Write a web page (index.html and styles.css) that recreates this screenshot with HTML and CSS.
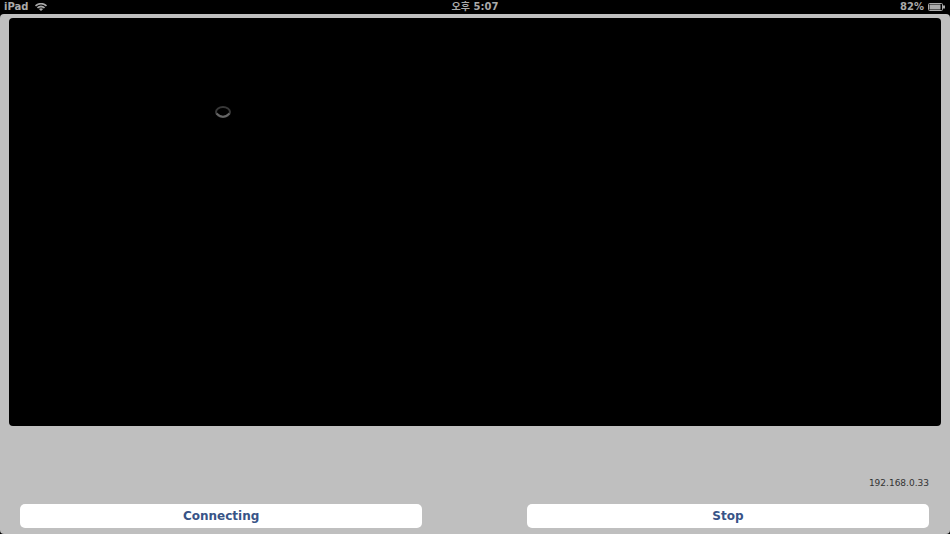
FILE: index.html
```
<!DOCTYPE html>
<html lang="ko">
<head>
    <meta charset="UTF-8">
    <title>Video client</title>
    <link rel="stylesheet" href="styles.css">
</head>
<body class="page">
<header class="status-bar">
    <div class="status-left">
        <span>iPad</span>
        <svg class="wifi" viewBox="0 0 14 9" aria-hidden="true">
            <path d="M.8 3.2Q7-1.6 13.2 3.2M3 5.5Q7 2.3 11 5.5" fill="none" stroke="currentColor" stroke-width="2"/>
            <path d="M4.6 6.7Q7 5 9.4 6.7L7 9z" fill="currentColor"/>
        </svg>
    </div>
    <div class="status-time">오후 5:07</div>
    <div class="status-right">
        <span>82%</span>
        <svg class="battery" viewBox="0 0 18 8" aria-hidden="true">
            <rect x=".5" y=".5" width="14" height="7" rx="1" fill="none" stroke="currentColor"/>
            <rect x="1.5" y="1.5" width="11" height="5" fill="currentColor"/>
            <path d="M15 2.5h2v3h-2z" fill="currentColor"/>
        </svg>
    </div>
</header>
<main class="root">
    <div class="video">
        <svg class="spinner" viewBox="0 0 18 14" aria-hidden="true">
            <ellipse cx="9" cy="7" rx="7" ry="5" fill="none" stroke="#383838" stroke-width="2"/>
            <path d="M2.5 8.5Q9 15 15.5 8.5" fill="none" stroke="#666" stroke-width="2"/>
        </svg>
    </div>
    <div class="address">192.168.0.33</div>
    <div class="controls">
        <button type="button">Connecting</button>
        <button type="button">Stop</button>
    </div>
</main>
</body>
</html>
```
FILE: styles.css
```
* {
    box-sizing: border-box;
}

.page {
    display: flex;
    flex-direction: column;
    min-height: 100vh;
    margin: 0;
    background: black;
    font-family: "DejaVu Sans", "Noto Sans CJK KR", sans-serif;
}

.status-bar {
    display: grid;
    grid-template-columns: 1fr auto 1fr;
    align-items: center;
    height: 14px;
    padding: 0 4px;
    color: #aaa;
    font-size: 10px;
    font-weight: bold;
    line-height: 14px;
}

.status-left,
.status-right {
    display: flex;
    align-items: center;
    gap: 6px;
}

.status-right {
    justify-content: flex-end;
    gap: 4px;
}

.wifi {
    width: 14px;
    height: 8px;
}

.battery {
    width: 18px;
    height: 8px;
}

.root {
    flex: 1;
    display: flex;
    flex-direction: column;
    padding: 4px 9px 6px;
    border-radius: 4px;
    background: #bfbfbf;
}

.video {
    flex: 1;
    min-height: 200px;
    padding: 87px 22%;
    border-radius: 4px;
    background: black;
}

.spinner {
    display: block;
    width: 18px;
    height: 14px;
}

.address {
    margin-top: 50px;
    padding-right: 12px;
    color: #333;
    font-size: 9px;
    line-height: 14px;
    text-align: right;
}

.controls {
    display: grid;
    grid-template-columns: 1fr 1fr;
    gap: 11.5%;
    margin-top: 14px;
    padding: 0 12px 0 11px;
}

.controls button {
    height: 24px;
    padding: 0;
    border: 0;
    border-radius: 5px;
    background: white;
    color: #385487;
    font-family: inherit;
    font-size: 12px;
    font-weight: bold;
}
```
